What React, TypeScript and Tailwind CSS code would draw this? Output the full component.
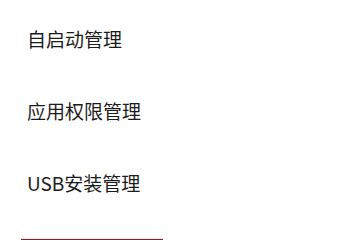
import React from "react";

const items = ["自启动管理", "应用权限管理", "USB安装管理"];

export default function App() {
  return (
    <div
      className="w-[350px] h-[240px] bg-white overflow-hidden flex flex-col pt-[3px]"
      style={{ fontFamily: '"Noto Sans CJK SC", "Noto Sans", sans-serif' }}
    >
      {items.map((t) => (
        <div key={t} className="h-[72px] flex items-center pl-[27px] text-[19px] text-[#1c1c1c]">
          {t}
        </div>
      ))}
      <div className="mt-[19px] ml-[21px] w-[142px] h-[2px] bg-[#fbe6e6] border-b border-[#6e2b2b]" />
    </div>
  );
}
